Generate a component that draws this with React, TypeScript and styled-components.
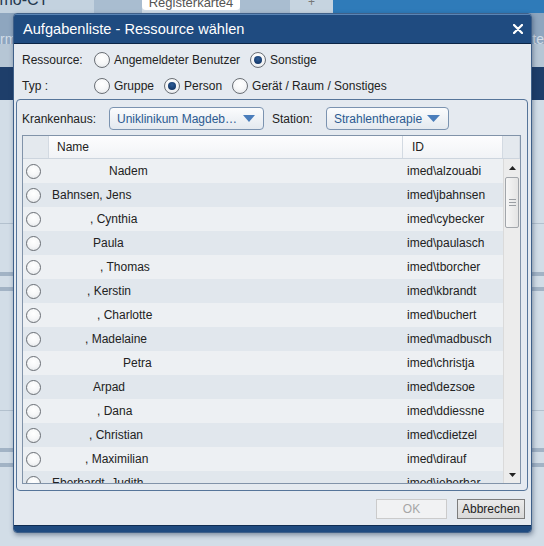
import React from "react";
import styled, { createGlobalStyle } from "styled-components";

const GlobalStyle = createGlobalStyle`
  *, *::before, *::after { box-sizing: border-box; }
  html, body { margin: 0; padding: 0; }
  body { font-family: "Liberation Sans", Arial, sans-serif; font-size: 12px; color: #222; }
`;

const Page = styled.div`
  position: relative;
  width: 544px;
  height: 546px;
  overflow: hidden;
  background: #d2dde7;
  display: flex;
  flex-direction: column;
`;

const TabStrip = styled.div`
  height: 13px;
  flex-shrink: 0;
  display: flex;
  overflow: hidden;
`;

const StripCell = styled.div<{ $w?: number; $bg: string }>`
  ${(p) => (p.$w ? `width: ${p.$w}px; flex-shrink: 0;` : "flex: 1;")}
  background: ${(p) => p.$bg};
  overflow: hidden;
  display: flex;
  justify-content: center;
`;

const AppName = styled.div`
  font-size: 16px;
  line-height: 16px;
  margin-top: -8px;
  margin-left: -1px;
  color: #24384e;
  width: 100%;
`;

const Tab = styled.div`
  width: 98px;
  height: 10px;
  flex-shrink: 0;
  background: #ffffff;
  border-radius: 0 0 4px 4px;
  overflow: hidden;
  display: flex;
  justify-content: center;
`;

const TabText = styled.div<{ $size: number; $color: string }>`
  font-size: ${(p) => p.$size}px;
  line-height: ${(p) => p.$size}px;
  margin-top: -4px;
  color: ${(p) => p.$color};
  white-space: nowrap;
`;

const Band = styled.div<{ $h: number; $bg: string }>`
  height: ${(p) => p.$h}px;
  flex-shrink: 0;
  background: ${(p) => p.$bg};
  display: flex;
  justify-content: space-between;
  align-items: flex-end;
  overflow: hidden;
`;

const BandText = styled.span`
  font-size: 14px;
  line-height: 14px;
  color: #d3dde7;
  margin-bottom: -2px;
`;

const Content = styled.div`
  flex: 1;
  display: flex;
  flex-direction: column;
`;

const Gap = styled.div<{ $h: number }>`
  height: ${(p) => p.$h}px;
  flex-shrink: 0;
`;

const Rule = styled.div<{ $h: number; $c: string }>`
  height: ${(p) => p.$h}px;
  flex-shrink: 0;
  background: ${(p) => p.$c};
`;

/* ---------- dialog ---------- */

const Dialog = styled.div`
  position: absolute;
  left: 13px;
  top: 13px;
  width: 519px;
  height: 520px;
  display: flex;
  flex-direction: column;
  background: #e5eaf0;
  border: 1px solid #3f6089;
  border-radius: 4px;
  box-shadow: 1px 2px 5px rgba(20, 40, 70, 0.45);
  overflow: hidden;
`;

const TitleBar = styled.div`
  height: 30px;
  flex-shrink: 0;
  background: #1f4b80;
  border-bottom: 1px solid #0b2546;
  box-shadow: inset 0 1px 0 #5a85b6;
  color: #fff;
  font-size: 14.6px;
  display: flex;
  align-items: center;
  justify-content: space-between;
  padding: 1px 8px 0 9px;
`;

const CloseButton = styled.div`
  width: 10px;
  height: 10px;
  display: flex;
`;

const Options = styled.div`
  height: 55px;
  flex-shrink: 0;
  padding: 3px 0 0 8px;
  display: flex;
  flex-direction: column;
`;

const OptionRow = styled.div`
  height: 26px;
  display: flex;
  align-items: center;
`;

const OptionLabel = styled.span`
  width: 72px;
  flex-shrink: 0;
`;

const Choice = styled.label`
  display: flex;
  align-items: center;
  gap: 4px;
  margin-right: 10px;
`;

const Radio = styled.span<{ $checked?: boolean; $size: number }>`
  width: ${(p) => p.$size}px;
  height: ${(p) => p.$size}px;
  flex-shrink: 0;
  border-radius: 50%;
  border: 1px solid #6a6f75;
  background: radial-gradient(circle at 50% 35%, #ffffff 0%, #f6f7f8 50%, #dfe2e6 100%);
  display: flex;
  align-items: center;
  justify-content: center;
  &::after {
    content: "";
    display: ${(p) => (p.$checked ? "block" : "none")};
    width: 8px;
    height: 8px;
    border-radius: 50%;
    background: radial-gradient(circle at 50% 35%, #2f5e98 0%, #163a6c 70%);
  }
`;

const Panel = styled.div`
  height: 392px;
  flex-shrink: 0;
  margin: 0 3px 0 2px;
  border: 1px solid #56759a;
  border-radius: 4px;
  padding: 7px 6px 6px 5px;
  display: flex;
  flex-direction: column;
  gap: 5px;
`;

const FilterRow = styled.div`
  height: 23px;
  flex-shrink: 0;
  display: flex;
  align-items: center;
`;

const FilterLabel = styled.span<{ $w: number }>`
  width: ${(p) => p.$w}px;
  flex-shrink: 0;
`;

const Select = styled.div<{ $w: number }>`
  width: ${(p) => p.$w}px;
  height: 23px;
  flex-shrink: 0;
  margin-right: 8px;
  border: 1px solid #7b93b0;
  border-radius: 4px;
  background: linear-gradient(#fbfcfd, #e4e9ef);
  color: #2b5a91;
  padding: 0 8px 0 7px;
  display: flex;
  align-items: center;
  justify-content: space-between;
  white-space: nowrap;
  overflow: hidden;
`;

const Table = styled.div`
  flex: 1;
  border: 1px solid #8193a9;
  display: flex;
  flex-direction: column;
  overflow: hidden;
  background: #e6ebf0;
`;

const HeaderRow = styled.div`
  height: 23px;
  flex-shrink: 0;
  display: grid;
  grid-template-columns: 26px 354px 100px 17px;
  border-bottom: 1px solid #cdd5de;
`;

const HeaderCell = styled.div<{ $plain?: boolean; $pad?: number }>`
  background: ${(p) => (p.$plain ? "#e4e9ee" : "linear-gradient(#fdfdfe, #f1f3f6)")};
  border-right: 1px solid #d3dae2;
  padding-left: ${(p) => p.$pad ?? 0}px;
  display: flex;
  align-items: center;
  color: #222;
`;

const TableBody = styled.div`
  flex: 1;
  display: flex;
  overflow: hidden;
`;

const Rows = styled.div`
  width: 480px;
  display: flex;
  flex-direction: column;
  overflow: hidden;
`;

const Row = styled.div<{ $odd: boolean }>`
  height: 24px;
  flex-shrink: 0;
  display: grid;
  grid-template-columns: 26px 354px 100px;
  align-items: center;
  background: ${(p) => (p.$odd ? "#edf0f3" : "#e1e7ed")};
`;

const RadioCell = styled.div`
  padding-left: 3px;
  display: flex;
`;

const NameCell = styled.div`
  padding-left: 3px;
  display: flex;
  white-space: nowrap;
`;

const Redacted = styled.span<{ $w: number }>`
  display: inline-block;
  width: ${(p) => p.$w}px;
  flex-shrink: 0;
`;

const IdCell = styled.div`
  padding-left: 4px;
  white-space: nowrap;
`;

const ScrollBar = styled.div`
  width: 17px;
  flex-shrink: 0;
  background: #ececec;
  border-left: 1px solid #dadada;
  display: flex;
  flex-direction: column;
`;

const ScrollArrow = styled.div`
  height: 17px;
  flex-shrink: 0;
  display: flex;
  align-items: center;
  justify-content: center;
`;

const Thumb = styled.div`
  height: 51px;
  margin: 1px 1px 0 1px;
  border: 1px solid #a2a6ab;
  border-radius: 2px;
  background: linear-gradient(90deg, #f6f6f6, #e4e4e4);
  display: flex;
  flex-direction: column;
  align-items: center;
  justify-content: center;
  gap: 2px;
`;

const Grip = styled.div`
  width: 7px;
  height: 1px;
  background: #9a9ea3;
`;

const Track = styled.div`
  flex: 1;
`;

const Footer = styled.div`
  height: 34px;
  flex-shrink: 0;
  display: flex;
  justify-content: flex-end;
  align-items: flex-start;
  gap: 10px;
  padding: 8px 6px 0 0;
`;

const Button = styled.div<{ $w: number; $disabled?: boolean }>`
  width: ${(p) => p.$w}px;
  height: 20px;
  display: flex;
  align-items: center;
  justify-content: center;
  border: 1px solid ${(p) => (p.$disabled ? "#cbcbcb" : "#7d7d7d")};
  background: ${(p) => (p.$disabled ? "#f1f2f3" : "linear-gradient(#ebebeb, #d9d9d9)")};
  color: ${(p) => (p.$disabled ? "#a6a6a6" : "#1e1e1e")};
`;

const BottomStrip = styled.div`
  flex: 1;
  background: #1f4b80;
  border-top: 1px solid #0f2c52;
`;

const Triangle = ({ w, h, color }: { w: number; h: number; color: string }) => (
  <svg width={w} height={h} viewBox={`0 0 ${w} ${h}`}>
    <polygon points={`0,0 ${w},0 ${w / 2},${h}`} fill={color} />
  </svg>
);

type Person = { hidden: number; name: string; id: string };

const people: Person[] = [
  { hidden: 57, name: "Nadem", id: "imed\\alzouabi" },
  { hidden: 0, name: "Bahnsen, Jens", id: "imed\\jbahnsen" },
  { hidden: 38, name: ", Cynthia", id: "imed\\cybecker" },
  { hidden: 41, name: "Paula", id: "imed\\paulasch" },
  { hidden: 48, name: ", Thomas", id: "imed\\tborcher" },
  { hidden: 35, name: ", Kerstin", id: "imed\\kbrandt" },
  { hidden: 45, name: ", Charlotte", id: "imed\\buchert" },
  { hidden: 33, name: ", Madelaine", id: "imed\\madbusch" },
  { hidden: 71, name: "Petra", id: "imed\\christja" },
  { hidden: 41, name: "Arpad", id: "imed\\dezsoe" },
  { hidden: 45, name: ", Dana", id: "imed\\ddiessne" },
  { hidden: 37, name: ", Christian", id: "imed\\cdietzel" },
  { hidden: 33, name: ", Maximilian", id: "imed\\dirauf" },
  { hidden: 0, name: "Eberhardt, Judith", id: "imed\\jeberhar" },
];

export default function App() {
  return (
    <>
      <GlobalStyle />
      <Page>
        <TabStrip>
          <StripCell $w={94} $bg="#c3d2df">
            <AppName>mo-CT</AppName>
          </StripCell>
          <StripCell $w={48} $bg="#a9bdd0" />
          <Tab>
            <TabText $size={13} $color="#555">Registerkarte4</TabText>
          </Tab>
          <StripCell $w={50} $bg="#a9bdd0" />
          <StripCell $w={43} $bg="#c6d4e0">
            <TabText $size={12} $color="#777">+</TabText>
          </StripCell>
          <StripCell $bg="#2f7bb9" />
        </TabStrip>
        <Band $h={31} $bg="#8ea6bf">
          <BandText>rm</BandText>
          <BandText>te</BandText>
        </Band>
        <Band $h={23} $bg="#b6c6d5" />
        <Band $h={33} $bg="#1e3e6a" />
        <Content>
          <Gap $h={123} />
          <Rule $h={1} $c="#b3c1ce" />
          <Gap $h={48} />
          <Rule $h={4} $c="#a2b3c5" />
          <Gap $h={11} />
          <Rule $h={4} $c="#a2b3c5" />
          <Gap $h={119} />
          <Rule $h={1} $c="#b3c1ce" />
          <Gap $h={37} />
          <Rule $h={4} $c="#a2b3c5" />
          <Gap $h={11} />
          <Rule $h={4} $c="#a2b3c5" />
        </Content>

        <Dialog>
          <TitleBar>
            <span>Aufgabenliste - Ressource wählen</span>
            <CloseButton>
              <svg width="10" height="10" viewBox="0 0 10 10">
                <path d="M1 1 L9 9 M9 1 L1 9" stroke="#fff" strokeWidth="2.3" strokeLinecap="round" />
              </svg>
            </CloseButton>
          </TitleBar>

          <Options>
            <OptionRow>
              <OptionLabel>Ressource:</OptionLabel>
              <Choice>
                <Radio $size={16} />
                Angemeldeter Benutzer
              </Choice>
              <Choice>
                <Radio $size={16} $checked />
                Sonstige
              </Choice>
            </OptionRow>
            <OptionRow>
              <OptionLabel>Typ :</OptionLabel>
              <Choice>
                <Radio $size={16} />
                Gruppe
              </Choice>
              <Choice>
                <Radio $size={16} $checked />
                Person
              </Choice>
              <Choice>
                <Radio $size={16} />
                Gerät / Raum / Sonstiges
              </Choice>
            </OptionRow>
          </Options>

          <Panel>
            <FilterRow>
              <FilterLabel $w={87}>Krankenhaus:</FilterLabel>
              <Select $w={155}>
                <span>Uniklinikum Magdeb…</span>
                <Triangle w={12} h={7} color="#4a7dbb" />
              </Select>
              <FilterLabel $w={54}>Station:</FilterLabel>
              <Select $w={123}>
                <span>Strahlentherapie</span>
                <Triangle w={13} h={7} color="#4a7dbb" />
              </Select>
            </FilterRow>

            <Table>
              <HeaderRow>
                <HeaderCell $plain />
                <HeaderCell $pad={8}>Name</HeaderCell>
                <HeaderCell $pad={9}>ID</HeaderCell>
                <HeaderCell $plain />
              </HeaderRow>
              <TableBody>
                <Rows>
                  {people.map((p, i) => (
                    <Row key={p.id} $odd={i % 2 === 0}>
                      <RadioCell>
                        <Radio $size={15} />
                      </RadioCell>
                      <NameCell>
                        {p.hidden > 0 && <Redacted $w={p.hidden} />}
                        <span>{p.name}</span>
                      </NameCell>
                      <IdCell>{p.id}</IdCell>
                    </Row>
                  ))}
                </Rows>
                <ScrollBar>
                  <ScrollArrow>
                    <svg width="7" height="4" viewBox="0 0 7 4">
                      <polygon points="0,4 7,4 3.5,0" fill="#222" />
                    </svg>
                  </ScrollArrow>
                  <Thumb>
                    <Grip />
                    <Grip />
                    <Grip />
                  </Thumb>
                  <Track />
                  <ScrollArrow>
                    <Triangle w={7} h={4} color="#222" />
                  </ScrollArrow>
                </ScrollBar>
              </TableBody>
            </Table>
          </Panel>

          <Footer>
            <Button $w={71} $disabled>OK</Button>
            <Button $w={68}>Abbrechen</Button>
          </Footer>
          <BottomStrip />
        </Dialog>
      </Page>
    </>
  );
}
